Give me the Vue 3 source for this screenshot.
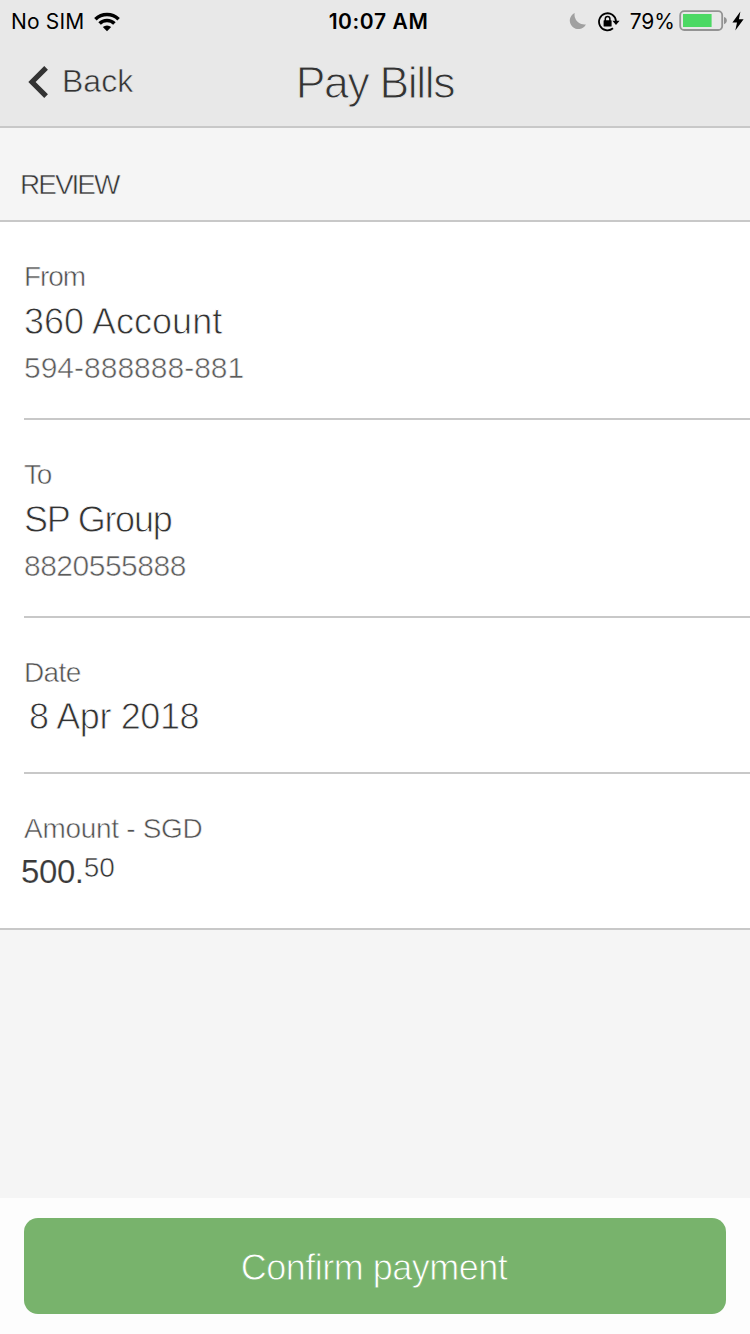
<script setup>
const rows = [
  { key: 'from', label: 'From', value: '360 Account', sub: '594-888888-881' },
  { key: 'to', label: 'To', value: 'SP Group', sub: '8820555888' },
  { key: 'date', label: 'Date', value: '8 Apr 2018' },
]
</script>

<template>
  <div class="screen">
    <header class="top">
      <div class="status">
        <div class="status-left">
          <span class="carrier">No SIM</span>
          <svg class="wifi" width="26" height="20" viewBox="0 0 26 20">
            <g fill="none" stroke="#000" stroke-width="3.6">
              <path d="M1.4 7.2A16.8 16.8 0 0 1 24.6 7.2" />
              <path d="M5.6 11.5A10.6 10.6 0 0 1 20.4 11.5" />
            </g>
            <path d="M13 19.3L8.8 15.1A6.1 6.1 0 0 1 17.2 15.1Z" fill="#000" />
          </svg>
        </div>
        <span class="clock">10:07 AM</span>
        <div class="status-right">
          <svg class="moon" width="18" height="18" viewBox="0 0 18 18">
            <path d="M5.7 0.9A9.8 9.8 0 0 0 16.9 12.4A8.5 8.5 0 1 1 5.7 0.9Z" fill="#a0a0a0" />
          </svg>
          <svg class="lock" width="22" height="20" viewBox="0 0 22 20">
            <path d="M15 16.3A8.5 8.5 0 1 1 18 9.2" fill="none" stroke="#000" stroke-width="1.8" />
            <path d="M14.4 8.8H21.6L18 13Z" fill="#000" />
            <rect x="5.6" y="8.2" width="8" height="6.4" rx="0.6" fill="#000" />
            <path d="M7.3 9V6.8A2.3 2.3 0 0 1 11.9 6.8V9" fill="none" stroke="#000" stroke-width="1.5" />
          </svg>
          <span class="percent">79%</span>
          <svg class="battery" width="48" height="22" viewBox="0 0 48 22">
            <rect x="1.2" y="1.2" width="42" height="18.8" rx="4" fill="none" stroke="#939393" stroke-width="1.8" />
            <rect x="4" y="4" width="28.6" height="13" fill="#4cd964" />
            <path d="M45 7Q47.8 7.8 47.8 10.6T45 14.2Z" fill="#939393" />
          </svg>
          <svg class="bolt" width="12" height="20" viewBox="0 0 12 20">
            <path d="M8.4 0.6L0.4 11.4H5L3.3 19.5L11.6 8.2H6.9Z" fill="#000" />
          </svg>
        </div>
      </div>
      <nav class="nav">
        <div class="back">
          <svg width="22" height="34" viewBox="0 0 22 34">
            <path d="M20.1 2.9L6 17L20.1 31.1" fill="none" stroke="#333" stroke-width="5.2" />
          </svg>
          <span class="thin back-text">Back</span>
        </div>
        <h1 class="thin title">Pay Bills</h1>
      </nav>
    </header>

    <h2 class="thin review">REVIEW</h2>

    <main class="details">
      <section v-for="r in rows" :key="r.key" class="row" :class="r.key">
        <div class="thin label">{{ r.label }}</div>
        <div class="thin value">{{ r.value }}</div>
        <div v-if="r.sub" class="thin sub">{{ r.sub }}</div>
      </section>
      <section class="row amount">
        <div class="thin label">Amount - SGD</div>
        <div class="money"><span class="thin whole">500.</span><span class="thin cents">50</span></div>
      </section>
    </main>

    <footer class="footer">
      <button class="thin confirm">Confirm payment</button>
    </footer>
  </div>
</template>

<style>
body { margin: 0; }
</style>

<style scoped>
.screen {
  --bg: #f5f5f5;
  width: 750px;
  height: 1334px;
  overflow: hidden;
  display: flex;
  flex-direction: column;
  background: var(--bg);
  color: #333;
  font-family: "Liberation Sans", Arial, sans-serif;
}
/* A stroke in the surface colour slims the letters to a light weight. */
.thin {
  font-weight: 400;
  -webkit-text-stroke: 0.55px var(--bg);
  white-space: nowrap;
}
.top {
  --bg: #e8e8e8;
  box-sizing: border-box;
  height: 128px;
  background: var(--bg);
  border-bottom: 2px solid #c8c8c8;
}
.status {
  height: 42px;
  display: grid;
  grid-template-columns: 1fr auto 1fr;
  align-items: center;
  font: 400 21px/44px Inter, sans-serif;
  color: #000;
}
.status-left { display: flex; align-items: center; padding-left: 11px; }
.carrier { letter-spacing: 0.15px; }
.wifi { margin-left: 10px; margin-top: -1px; }
.clock { font-weight: 600; letter-spacing: 0.6px; margin-left: 7px; }
.status-right { display: flex; align-items: center; justify-content: flex-end; padding-right: 6px; }
.moon { margin-top: -2px; }
.lock { margin-left: 11px; margin-top: -1px; }
.percent { margin-left: 10px; }
.battery { margin-left: 4px; margin-top: -2px; }
.bolt { margin-left: 5px; margin-top: -2px; }
.nav {
  height: 84px;
  display: grid;
  grid-template-columns: 1fr auto 1fr;
  align-items: start;
}
.back { display: flex; align-items: center; height: 80px; padding-left: 26px; }
.back-text { font-size: 32px; line-height: 78px; margin-left: 14px; margin-top: -2px; }
.title { margin: 0; font-size: 44.5px; line-height: 82px; letter-spacing: -1.35px; -webkit-text-stroke-width: 1px; }
.review {
  box-sizing: border-box;
  height: 94px;
  margin: 0;
  padding: 37px 0 0 20px;
  font-size: 28px;
  line-height: 40px;
  letter-spacing: -2px;
  border-bottom: 2px solid #c8c8c8;
}
.details {
  --bg: #fff;
  background: var(--bg);
  padding-left: 24px;
  border-bottom: 2px solid #c8c8c8;
}
.row {
  box-sizing: border-box;
  height: 198px;
  padding-top: 37px;
  border-bottom: 2px solid #c8c8c8;
}
.label { font-size: 28px; line-height: 36px; color: #505050; }
.value { font-size: 36px; line-height: 54px; -webkit-text-stroke-width: 0.8px; }
.sub { font-size: 30px; line-height: 38px; color: #5c5c5c; }
.from .label { letter-spacing: -1.1px; }
.from .value { letter-spacing: 0; }
.from .sub { letter-spacing: 0; }
.to .label { letter-spacing: -1.2px; }
.to .value { letter-spacing: -1.25px; }
.to .sub { letter-spacing: -0.5px; }
.date { height: 156px; }
.date .label { letter-spacing: -0.6px; }
.date .value { letter-spacing: -0.4px; margin-left: 5px; line-height: 51px; }
.amount { height: 154px; border-bottom: 0; }
.amount .label { letter-spacing: -0.3px; }
.money { display: flex; line-height: 50px; margin-left: -3px; }
.whole { font-size: 33px; letter-spacing: -0.4px; color: #3a3a3a; -webkit-text-stroke-width: 0.15px; }
.cents { font-size: 28px; line-height: 42px; }
.footer {
  margin-top: auto;
  box-sizing: border-box;
  height: 136px;
  padding: 20px 24px;
  background: #fdfdfd;
}
.confirm {
  --bg: #78b36c;
  display: block;
  width: 100%;
  height: 96px;
  padding: 4px 2px 0 0;
  border: 0;
  border-radius: 14px;
  background: var(--bg);
  color: #fff;
  font: 400 36px "Liberation Sans", Arial, sans-serif;
  letter-spacing: -0.5px;
  -webkit-text-stroke-width: 0.8px;
}
</style>
